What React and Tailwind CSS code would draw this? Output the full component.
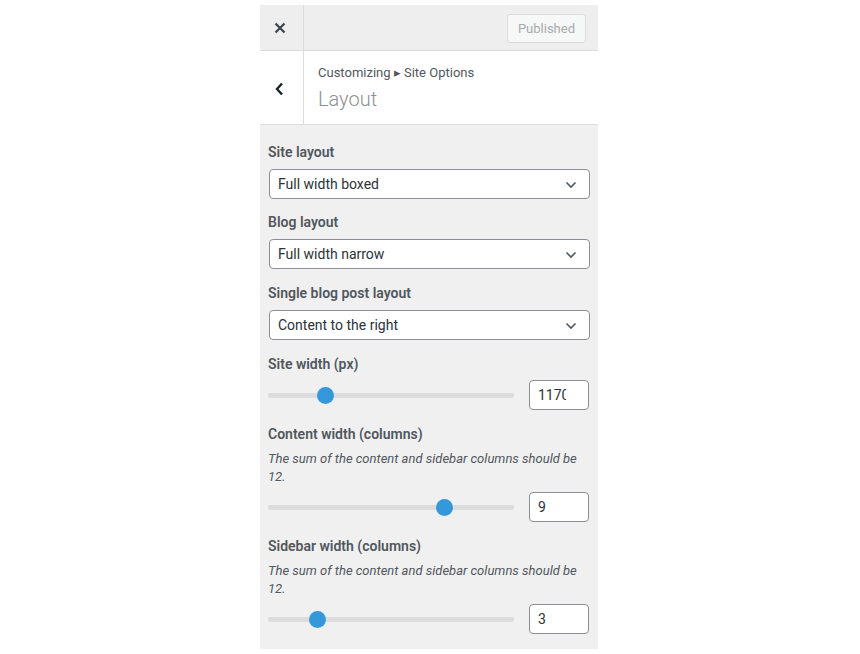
import React from "react";

const font = { fontFamily: "Roboto, 'Liberation Sans', sans-serif" };

function Chevron() {
  return (
    <svg width="12" height="8" viewBox="0 0 12 8" className="absolute right-[12px] top-[11px]">
      <path d="M1.5 1.5 L6 6 L10.5 1.5" fill="none" stroke="#50575e" strokeWidth="1.6" />
    </svg>
  );
}

function SelectControl({ label, value, first }) {
  return (
    <div className={first ? "flex flex-col mb-[13px]" : "flex flex-col mb-[14px]"}>
      <div className="text-[14px] leading-[20px] font-semibold text-[#50575e]">{label}</div>
      <div className="relative mt-[7px] ml-[1px] h-[30px] w-[321px] bg-white border border-[#8c8f94] rounded-[4px] flex items-center pl-[8px] text-[14px] text-[#2c3338]">
        {value}
        <Chevron />
      </div>
    </div>
  );
}

function SliderControl({ label, desc, value, pos }) {
  return (
    <div className="flex flex-col mb-[14px]">
      <div className="text-[14px] leading-[20px] font-semibold text-[#50575e]">{label}</div>
      {desc && (
        <div className="mt-[6px] text-[13px] leading-[18px] italic text-[#50575e] pr-[10px]">{desc}</div>
      )}
      <div className="mt-[6px] flex items-center h-[30px]">
        <div className="relative w-[246px] h-[5px] bg-[#dcdcdc] rounded-[2px]">
          <div
            className="absolute top-[-6px] w-[17px] h-[17px] rounded-full bg-[#3498db]"
            style={{ left: pos - 8 }}
          />
        </div>
        <div className="ml-[15px] w-[60px] h-[30px] bg-white border border-[#8c8f94] rounded-[4px] flex items-center pl-[8px] text-[14px] text-[#2c3338]">
          <span className="block w-[28px] overflow-hidden whitespace-nowrap">{value}</span>
        </div>
      </div>
    </div>
  );
}

export default function App() {
  const desc = "The sum of the content and sidebar columns should be 12.";
  return (
    <div className="w-[860px] h-[654px] bg-white pt-[5px]" style={font}>
      <div className="ml-[260px] w-[338px] h-[644px] bg-[#f0f0f0] flex flex-col">
        <div className="flex h-[46px] bg-[#eeeeee] border-b border-[#dcdcde]">
          <div className="w-[44px] border-r border-[#dcdcde] flex items-center justify-center pr-[3px]">
            <svg width="12" height="12" viewBox="0 0 12 12">
              <path d="M1.5 1.5 L10.5 10.5 M10.5 1.5 L1.5 10.5" stroke="#3c434a" strokeWidth="2.2" />
            </svg>
          </div>
          <div className="flex-1 flex items-center justify-end pr-[12px] pt-[2px]">
            <div className="h-[29px] px-[10px] border border-[#dcdcde] bg-[#f6f7f7] rounded-[3px] flex items-center text-[13px] text-[#a7aaad]">
              Published
            </div>
          </div>
        </div>
        <div className="flex h-[74px] bg-white border-b border-[#dcdcde]">
          <div className="w-[44px] border-r border-[#dcdcde] flex items-center justify-center pr-[4px] pt-[2px]">
            <svg width="9" height="14" viewBox="0 0 9 14">
              <path d="M7 1.5 L2 7 L7 12.5" fill="none" stroke="#1d2327" strokeWidth="2.4" />
            </svg>
          </div>
          <div className="flex flex-col pl-[14px] pt-[13px]">
            <div className="text-[13px] leading-[18px] text-[#50575e]">Customizing ▸ Site Options</div>
            <div className="text-[20px] leading-[28px] font-light text-[#8c8f94] mt-[3px]">Layout</div>
          </div>
        </div>
        <div className="flex flex-col pl-[8px] pt-[17px]">
          <SelectControl first label="Site layout" value="Full width boxed" />
          <SelectControl label="Blog layout" value="Full width narrow" />
          <SelectControl label="Single blog post layout" value="Content to the right" />
          <SliderControl label="Site width (px)" value="1170" pos={57} />
          <SliderControl label="Content width (columns)" desc={desc} value="9" pos={176} />
          <SliderControl label="Sidebar width (columns)" desc={desc} value="3" pos={49} />
        </div>
      </div>
    </div>
  );
}
